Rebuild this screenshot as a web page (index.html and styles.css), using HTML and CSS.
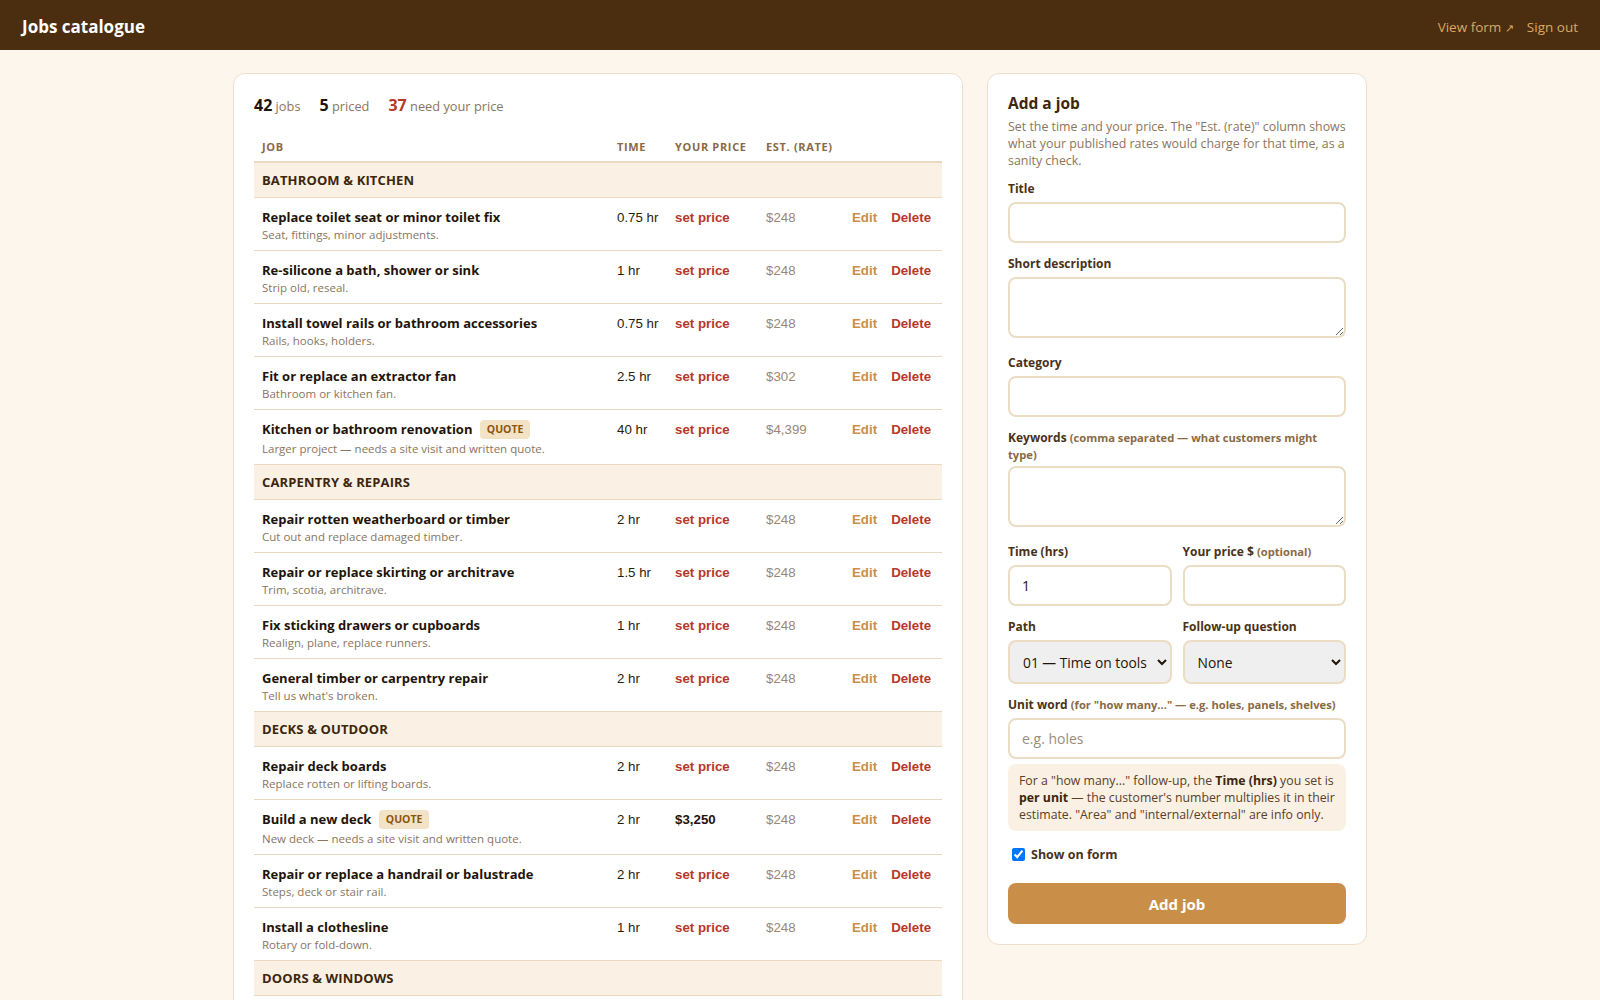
FILE: index.html
```html
<!DOCTYPE html>
<html lang="en">

<head>
  <meta charset="UTF-8">
  <meta name="viewport" content="width=device-width, initial-scale=1.0">
  <title>Jobs catalogue</title>
  <link rel="stylesheet" href="styles.css">
</head>

<body>
  <!-- Top bar -->
  <header class="topbar">
    <div class="brand">Jobs catalogue</div>
    <nav class="topnav">
      <a href="#">View form <span class="ext">↗</span></a>
      <a href="#">Sign out</a>
    </nav>
  </header>

  <main class="layout">
    <!-- Jobs list -->
    <section class="card jobs-card">
      <div class="stats">
        <span class="stat"><b>42</b> jobs</span>
        <span class="stat"><b>5</b> priced</span>
        <span class="stat"><b class="warn">37</b> need your price</span>
      </div>

      <table class="jobs">
        <thead>
          <tr>
            <th class="col-job">Job</th>
            <th class="col-time">Time</th>
            <th class="col-price">Your price</th>
            <th class="col-est">Est. (rate)</th>
            <th class="col-actions"></th>
          </tr>
        </thead>
        <tbody>
          <tr class="cat"><td colspan="5">Bathroom &amp; Kitchen</td></tr>
          <tr>
            <td><div class="job-title">Replace toilet seat or minor toilet fix</div><div class="job-sub">Seat, fittings, minor adjustments.</div></td>
            <td class="num">0.75 hr</td>
            <td class="num"><a class="set-price" href="#">set price</a></td>
            <td class="num est">$248</td>
            <td class="num actions"><a class="edit" href="#">Edit</a><a class="del" href="#">Delete</a></td>
          </tr>
          <tr>
            <td><div class="job-title">Re-silicone a bath, shower or sink</div><div class="job-sub">Strip old, reseal.</div></td>
            <td class="num">1 hr</td>
            <td class="num"><a class="set-price" href="#">set price</a></td>
            <td class="num est">$248</td>
            <td class="num actions"><a class="edit" href="#">Edit</a><a class="del" href="#">Delete</a></td>
          </tr>
          <tr>
            <td><div class="job-title">Install towel rails or bathroom accessories</div><div class="job-sub">Rails, hooks, holders.</div></td>
            <td class="num">0.75 hr</td>
            <td class="num"><a class="set-price" href="#">set price</a></td>
            <td class="num est">$248</td>
            <td class="num actions"><a class="edit" href="#">Edit</a><a class="del" href="#">Delete</a></td>
          </tr>
          <tr>
            <td><div class="job-title">Fit or replace an extractor fan</div><div class="job-sub">Bathroom or kitchen fan.</div></td>
            <td class="num">2.5 hr</td>
            <td class="num"><a class="set-price" href="#">set price</a></td>
            <td class="num est">$302</td>
            <td class="num actions"><a class="edit" href="#">Edit</a><a class="del" href="#">Delete</a></td>
          </tr>
          <tr>
            <td><div class="job-title has-badge">Kitchen or bathroom renovation <span class="badge">Quote</span></div><div class="job-sub">Larger project — needs a site visit and written quote.</div></td>
            <td class="num">40 hr</td>
            <td class="num"><a class="set-price" href="#">set price</a></td>
            <td class="num est">$4,399</td>
            <td class="num actions"><a class="edit" href="#">Edit</a><a class="del" href="#">Delete</a></td>
          </tr>

          <tr class="cat"><td colspan="5">Carpentry &amp; Repairs</td></tr>
          <tr>
            <td><div class="job-title">Repair rotten weatherboard or timber</div><div class="job-sub">Cut out and replace damaged timber.</div></td>
            <td class="num">2 hr</td>
            <td class="num"><a class="set-price" href="#">set price</a></td>
            <td class="num est">$248</td>
            <td class="num actions"><a class="edit" href="#">Edit</a><a class="del" href="#">Delete</a></td>
          </tr>
          <tr>
            <td><div class="job-title">Repair or replace skirting or architrave</div><div class="job-sub">Trim, scotia, architrave.</div></td>
            <td class="num">1.5 hr</td>
            <td class="num"><a class="set-price" href="#">set price</a></td>
            <td class="num est">$248</td>
            <td class="num actions"><a class="edit" href="#">Edit</a><a class="del" href="#">Delete</a></td>
          </tr>
          <tr>
            <td><div class="job-title">Fix sticking drawers or cupboards</div><div class="job-sub">Realign, plane, replace runners.</div></td>
            <td class="num">1 hr</td>
            <td class="num"><a class="set-price" href="#">set price</a></td>
            <td class="num est">$248</td>
            <td class="num actions"><a class="edit" href="#">Edit</a><a class="del" href="#">Delete</a></td>
          </tr>
          <tr>
            <td><div class="job-title">General timber or carpentry repair</div><div class="job-sub">Tell us what's broken.</div></td>
            <td class="num">2 hr</td>
            <td class="num"><a class="set-price" href="#">set price</a></td>
            <td class="num est">$248</td>
            <td class="num actions"><a class="edit" href="#">Edit</a><a class="del" href="#">Delete</a></td>
          </tr>

          <tr class="cat"><td colspan="5">Decks &amp; Outdoor</td></tr>
          <tr>
            <td><div class="job-title">Repair deck boards</div><div class="job-sub">Replace rotten or lifting boards.</div></td>
            <td class="num">2 hr</td>
            <td class="num"><a class="set-price" href="#">set price</a></td>
            <td class="num est">$248</td>
            <td class="num actions"><a class="edit" href="#">Edit</a><a class="del" href="#">Delete</a></td>
          </tr>
          <tr>
            <td><div class="job-title has-badge">Build a new deck <span class="badge">Quote</span></div><div class="job-sub">New deck — needs a site visit and written quote.</div></td>
            <td class="num">2 hr</td>
            <td class="num"><span class="price">$3,250</span></td>
            <td class="num est">$248</td>
            <td class="num actions"><a class="edit" href="#">Edit</a><a class="del" href="#">Delete</a></td>
          </tr>
          <tr>
            <td><div class="job-title">Repair or replace a handrail or balustrade</div><div class="job-sub">Steps, deck or stair rail.</div></td>
            <td class="num">2 hr</td>
            <td class="num"><a class="set-price" href="#">set price</a></td>
            <td class="num est">$248</td>
            <td class="num actions"><a class="edit" href="#">Edit</a><a class="del" href="#">Delete</a></td>
          </tr>
          <tr>
            <td><div class="job-title">Install a clothesline</div><div class="job-sub">Rotary or fold-down.</div></td>
            <td class="num">1 hr</td>
            <td class="num"><a class="set-price" href="#">set price</a></td>
            <td class="num est">$248</td>
            <td class="num actions"><a class="edit" href="#">Edit</a><a class="del" href="#">Delete</a></td>
          </tr>

          <tr class="cat"><td colspan="5">Doors &amp; Windows</td></tr>
          <tr>
            <td><div class="job-title">Fix a sticking or dropped door</div><div class="job-sub">Plane, rehang, adjust hinges.</div></td>
            <td class="num">1 hr</td>
            <td class="num"><a class="set-price" href="#">set price</a></td>
            <td class="num est">$248</td>
            <td class="num actions"><a class="edit" href="#">Edit</a><a class="del" href="#">Delete</a></td>
          </tr>
          <tr>
            <td><div class="job-title">Replace a door handle or lock</div><div class="job-sub">Handles, latches, deadbolts.</div></td>
            <td class="num">1 hr</td>
            <td class="num"><a class="set-price" href="#">set price</a></td>
            <td class="num est">$248</td>
            <td class="num actions"><a class="edit" href="#">Edit</a><a class="del" href="#">Delete</a></td>
          </tr>
        </tbody>
      </table>
    </section>

    <!-- Add a job form -->
    <aside class="card form-card">
      <h2>Add a job</h2>
      <p class="intro">Set the time and your price. The "Est. (rate)" column shows what your published rates would charge for that time, as a sanity check.</p>

      <form class="job-form">
        <label class="field">
          <span class="lbl">Title</span>
          <input type="text">
        </label>

        <label class="field">
          <span class="lbl">Short description</span>
          <textarea></textarea>
        </label>

        <label class="field">
          <span class="lbl">Category</span>
          <input type="text">
        </label>

        <label class="field field-tight">
          <span class="lbl">Keywords <small>(comma separated — what customers might type)</small></span>
          <textarea></textarea>
        </label>

        <div class="pair">
          <label class="field">
            <span class="lbl">Time (hrs)</span>
            <input type="text" value="1">
          </label>
          <label class="field">
            <span class="lbl">Your price $ <small>(optional)</small></span>
            <input type="text">
          </label>
        </div>

        <div class="pair">
          <label class="field">
            <span class="lbl">Path</span>
            <select>
              <option>01 — Time on tools</option>
            </select>
          </label>
          <label class="field">
            <span class="lbl">Follow-up question</span>
            <select>
              <option>None</option>
            </select>
          </label>
        </div>

        <label class="field">
          <span class="lbl">Unit word <small>(for "how many..." — e.g. holes, panels, shelves)</small></span>
          <input type="text" placeholder="e.g. holes">
        </label>

        <div class="note">For a "how many..." follow-up, the <b>Time (hrs)</b> you set is <b>per unit</b> — the customer's number multiplies it in their estimate. "Area" and "internal/external" are info only.</div>

        <label class="check">
          <input type="checkbox" checked>
          <span>Show on form</span>
        </label>

        <button type="submit" class="btn-add">Add job</button>
      </form>
    </aside>
  </main>
</body>

</html>
```

FILE: styles.css
```css
/* General */
body {
  margin: 0;
  font-family: 'Open Sans', 'Noto Sans', sans-serif;
  background-color: #fdf6ec;
  color: #2a1c0c;
}

a {
  text-decoration: none;
}

/* Top bar */
.topbar {
  box-sizing: border-box;
  height: 50px;
  background-color: #4b2e0f;
  display: flex;
  align-items: center;
  justify-content: space-between;
  padding: 3px 22px 0;
}

.brand {
  color: #fff;
  font-size: 17px;
  font-weight: 700;
}

.topnav {
  display: flex;
  gap: 13px;
}

.topnav a {
  color: #d9a866;
  font-size: 13.5px;
}

.topnav .ext {
  font-size: 11px;
}

/* Layout */
.layout {
  max-width: 1134px;
  margin: 23px auto 0;
  display: grid;
  grid-template-columns: 1fr 380px;
  gap: 24px;
  align-items: start;
}

.card {
  background-color: #fff;
  border: 1px solid #ede0cb;
  border-radius: 12px;
}

/* Jobs card */
.jobs-card {
  padding: 20px 20px 0;
}

.stats {
  display: flex;
  gap: 19px;
  font-size: 12.8px;
  color: #8a7560;
}

.stats b {
  font-size: 16px;
  color: #1f1408;
}

.stats b.warn {
  color: #b5382a;
}

.jobs {
  width: 100%;
  table-layout: fixed;
  border-collapse: collapse;
  margin-top: 19px;
}

.jobs th {
  box-sizing: border-box;
  text-align: left;
  font-size: 11px;
  font-weight: 700;
  letter-spacing: 0.06em;
  text-transform: uppercase;
  color: #8a6a44;
  padding: 4px 8px 7px;
  border-bottom: 2px solid #ead9c0;
}

.col-time { width: 58px; }
.col-price { width: 91px; }
.col-est { width: 86px; }
.col-actions { width: 98px; }

.jobs td {
  padding: 10px 8px 8px;
  border-bottom: 1px solid #ead9c0;
  vertical-align: top;
}

.jobs tr.cat td {
  background-color: #faf1e4;
  font-size: 13px;
  font-weight: 700;
  line-height: 18px;
  text-transform: uppercase;
  letter-spacing: 0.01em;
  color: #3d260c;
  padding: 8px 8px 8px;
}

.job-title {
  font-size: 13px;
  font-weight: 700;
  color: #1f1408;
  line-height: 19px;
}

.job-title.has-badge {
  margin-bottom: 2px;
}

.job-sub {
  font-size: 11.5px;
  color: #8a7560;
  line-height: 15px;
}

.badge {
  display: inline-block;
  background-color: #f3e3c6;
  color: #8a560f;
  font-size: 10.5px;
  font-weight: 700;
  text-transform: uppercase;
  padding: 0 7px;
  border-radius: 4px;
  margin-left: 4px;
  line-height: 19px;
  vertical-align: 1px;
}

.num {
  font-family: 'Liberation Sans', Arial, sans-serif;
  font-size: 13.3px;
  line-height: 19px;
  white-space: nowrap;
}

.set-price {
  color: #b5382a;
  font-weight: 700;
}

.price {
  font-weight: 700;
  color: #1f1408;
}

.est {
  color: #9a8774;
}

.actions a {
  font-weight: 700;
}

.edit {
  color: #c98f48;
}

.del {
  color: #b5382a;
  margin-left: 14px;
}

/* Form card */
.form-card {
  padding: 18px 20px 20px;
}

.form-card h2 {
  margin: 0;
  font-size: 15.5px;
  font-weight: 700;
  color: #3d260c;
  line-height: 22px;
}

.intro {
  margin: 4px 0 0;
  font-size: 12.4px;
  line-height: 17px;
  color: #8a7560;
}

.job-form {
  display: flex;
  flex-direction: column;
  gap: 12px;
  margin-top: 11px;
}

.field {
  display: flex;
  flex-direction: column;
  gap: 5px;
}

.field-tight {
  gap: 3px;
}

.lbl {
  font-size: 12px;
  font-weight: 700;
  color: #4a3218;
  line-height: 17px;
}

.lbl small {
  font-size: 11.2px;
  color: #8a6a44;
}

.field input,
.field textarea,
.field select {
  box-sizing: border-box;
  width: 100%;
  border: 2px solid #ebdcc4;
  border-radius: 8px;
  font-family: inherit;
  font-size: 14px;
  color: #1f1408;
  padding: 8px 12px;
  background-color: #fff;
}

.field input {
  height: 41px;
}

.field textarea {
  height: 61px;
  resize: vertical;
  margin-bottom: 4px;
}

.field select {
  height: 44px;
  background-color: #efefef;
  padding: 8px 0 8px 9px;
  font-size: 13.8px;
}

.field input::placeholder {
  color: #9a8d80;
}

.pair {
  display: grid;
  grid-template-columns: 1fr 1fr;
  gap: 11px;
}

.note {
  background-color: #faf1e4;
  border-radius: 8px;
  padding: 8px 11px;
  font-size: 12.3px;
  line-height: 17px;
  color: #5a4028;
  margin-top: -7px;
}

.note b {
  color: #3d260c;
}

.check {
  display: flex;
  align-items: center;
  gap: 6px;
  font-size: 12.5px;
  font-weight: 700;
  color: #4a3218;
  margin-top: 3px;
}

.check input {
  margin: 0 0 0 4px;
  width: 13px;
  height: 13px;
}

.btn-add {
  margin-top: 8px;
  height: 41px;
  border: none;
  border-radius: 8px;
  background-color: #c98f48;
  color: #fff;
  font-family: inherit;
  font-size: 15px;
  font-weight: 700;
  cursor: pointer;
}
```
